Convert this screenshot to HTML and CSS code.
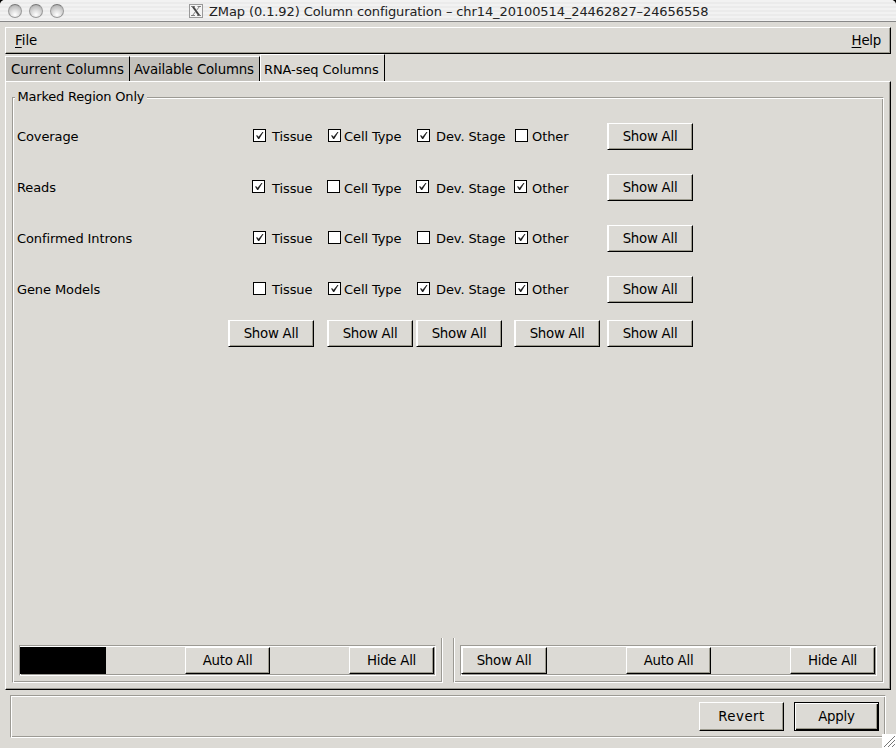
FILE: index.html
```html
<!DOCTYPE html>
<html lang="en">
<head>
<meta charset="utf-8">
<title>ZMap (0.1.92) Column configuration</title>
<link rel="stylesheet" href="styles.css">
</head>
<body>
<div class="window">
  <header class="titlebar">
    <div class="lights"><i class="light"></i><i class="light"></i><i class="light"></i></div>
    <svg class="xicon" width="14" height="14" viewBox="0 0 14 14"><rect x=".5" y=".5" width="13" height="13" fill="#f4f4f4" stroke="#999"/><path d="M3.8 2.5 10.2 11.5" stroke="#444" stroke-width="2"/><path d="M10.5 2.5 3.5 11.5M2 2.5h4M8.5 2.5H12M2 11.5h4M8 11.5h4" stroke="#666" stroke-width=".8"/></svg>
    <span class="title">ZMap (0.1.92) Column configuration – chr14_20100514_24462827–24656558</span>
  </header>
  <nav class="menubar"><span class="file"><u>F</u>ile</span><span class="help"><u>H</u>elp</span></nav>
  <div class="tabs">
    <div class="tab t1"><span>Current Columns</span></div>
    <div class="tab t2"><span>Available Columns</span></div>
    <div class="tab active"><span>RNA-seq Columns</span></div>
  </div>
  <main class="page">
    <section class="region">
      <h2 class="legend">Marked Region Only</h2>
      <div class="grid">
        <div class="name">Coverage</div>
        <label class="cell c1"><i class="box on"></i><span>Tissue</span></label>
        <label class="cell c2"><i class="box on"></i><span>Cell Type</span></label>
        <label class="cell c3"><i class="box on"></i><span>Dev. Stage</span></label>
        <label class="cell c4"><i class="box"></i><span>Other</span></label>
        <button class="btn"><span>Show All</span></button>

        <div class="name">Reads</div>
        <label class="cell c1 shift"><i class="box on"></i><span>Tissue</span></label>
        <label class="cell c2 shift"><i class="box"></i><span>Cell Type</span></label>
        <label class="cell c3 shift"><i class="box on"></i><span>Dev. Stage</span></label>
        <label class="cell c4 shift"><i class="box on"></i><span>Other</span></label>
        <button class="btn"><span>Show All</span></button>

        <div class="name">Confirmed Introns</div>
        <label class="cell c1"><i class="box on"></i><span>Tissue</span></label>
        <label class="cell c2"><i class="box"></i><span>Cell Type</span></label>
        <label class="cell c3"><i class="box"></i><span>Dev. Stage</span></label>
        <label class="cell c4"><i class="box on"></i><span>Other</span></label>
        <button class="btn"><span>Show All</span></button>

        <div class="name">Gene Models</div>
        <label class="cell c1"><i class="box"></i><span>Tissue</span></label>
        <label class="cell c2"><i class="box on"></i><span>Cell Type</span></label>
        <label class="cell c3"><i class="box on"></i><span>Dev. Stage</span></label>
        <label class="cell c4"><i class="box on"></i><span>Other</span></label>
        <button class="btn"><span>Show All</span></button>

        <div></div>
        <button class="btn"><span>Show All</span></button>
        <button class="btn"><span>Show All</span></button>
        <button class="btn"><span>Show All</span></button>
        <button class="btn"><span>Show All</span></button>
        <button class="btn"><span>Show All</span></button>
      </div>
    </section>
    <div class="groups">
      <div class="group left">
        <div class="etched strip">
          <div class="blank"></div>
          <button class="btn"><span>Auto All</span></button>
          <button class="btn"><span>Hide All</span></button>
        </div>
      </div>
      <div class="group right">
        <div class="etched strip">
          <button class="btn first"><span>Show All</span></button>
          <button class="btn"><span>Auto All</span></button>
          <button class="btn"><span>Hide All</span></button>
        </div>
      </div>
    </div>
  </main>
  <footer class="etched actions">
    <button class="btn revert"><span>Revert</span></button>
    <button class="btn apply"><span>Apply</span></button>
  </footer>
  <svg class="grip" width="14" height="14" viewBox="0 0 14 14"><rect width="14" height="14" fill="#fff"/><path d="M2 13 13 2M6 13l7-7M10 13l3-3" stroke="#777" stroke-width="1"/></svg>
</div>
</body>
</html>
```
FILE: styles.css
```css
* { box-sizing: border-box; }
body { margin: 0; background: #000; overflow: hidden; }
.window {
  position: relative;
  width: 896px;
  height: 748px;
  overflow: hidden;
  border-radius: 5px 5px 0 0;
  background: #dcdad5;
  color: #000;
  font: 13px/16px "DejaVu Sans", sans-serif;
  white-space: nowrap;
}
.titlebar {
  display: flex;
  height: 22px;
  padding-left: 8px;
  border-bottom: 1px solid #888;
  background: repeating-linear-gradient(#f2f2f2 0 2px, #ebebeb 2px 4px);
}
.lights { display: flex; gap: 7px; width: 181px; padding-top: 4px; }
.light {
  width: 14px;
  height: 14px;
  border: 1px solid #999;
  border-top-color: #777;
  border-radius: 50%;
  background: radial-gradient(circle at 50% 80%, #fff 0, #ddd 40%, #b8b8b8 80%);
}
.xicon { margin-top: 4px; }
.title {
  margin-left: 6px;
  font: 13px/23px "DejaVu Sans", sans-serif;
  letter-spacing: -0.1px;
  color: #222;
}

.menubar {
  display: flex;
  justify-content: space-between;
  width: 886px;
  height: 27px;
  margin: 5px 0 0 5px;
  padding: 4px 9px 0 9px;
  border: 1px solid;
  border-color: #fff #000 #000 #fff;
  box-shadow: inset -1px -1px #a19f94;
  font-size: 13.33px;
  line-height: 18px;
}
.help { letter-spacing: -0.25px; }
u { text-underline-offset: 2px; }

.tabs { display: flex; align-items: flex-end; height: 27px; padding-left: 5px; }
.tab {
  height: 25px;
  padding: 4px 0 0 5px;
  border: solid #fff;
  border-width: 1px 0 0 1px;
  border-right: 1px solid #000;
  background: #c4c2bd;
  font-size: 13.33px;
  line-height: 18px;
}
.t1 { width: 125px; letter-spacing: 0.05px; }
.t2 { width: 130px; padding-left: 4px; border-left: 0; letter-spacing: -0.16px; }
.tab.active {
  width: 125px;
  height: 27px;
  padding: 6px 0 0 3px;
  background: #dcdad5;
  font-size: 13px;
  letter-spacing: -0.08px;
}

.page {
  display: flex;
  flex-direction: column;
  width: 886px;
  height: 609px;
  margin-left: 5px;
  padding: 15px 6px 6px;
  border: 1px solid;
  border-color: #fff #000 #000 #fff;
  box-shadow: inset -1px -1px #9c9a94;
}
.region {
  width: 872px;
  height: 541px;
  border: 1px solid #9c9a94;
  border-width: 1px 1px 0;
  border-right: 1px solid #fff;
  box-shadow: inset 1px 1px #fff, inset -1px 0 #9c9a94;
}
.legend {
  width: 132px;
  height: 16px;
  margin: -9px 0 0 2px;
  padding-left: 2.5px;
  background: #dcdad5;
  font: 13px/16px "DejaVu Sans", sans-serif;
  letter-spacing: -0.2px;
}
.grid {
  display: grid;
  grid-template-columns: 211px 99px 89px 98px 93px 86px;
  grid-template-rows: 51px 51px 51px 44px 27px;
  padding: 18px 0 0 4px;
  letter-spacing: -0.1px;
}
.name { line-height: 27px; }
.cell { display: flex; height: 27px; padding: 6px 0 0 1px; }
.cell span { line-height: 16px; }
.box {
  display: block;
  position: relative;
  flex: none;
  width: 13px;
  height: 13px;
  border: 1px solid #000;
  background: #fff;
}
.box.on::after {
  content: "";
  position: absolute;
  left: 2px;
  top: 2px;
  width: 8px;
  height: 8px;
  background: #222;
  clip-path: polygon(0 3.6px, 1.2px 3.2px, 2.6px 4.8px, 6.4px 0, 7.5px 0, 3.2px 7px, 2.2px 7px);
}
.c1 { padding-left: 25px; }
.c1 span { margin-left: 6px; }
.c2 span { margin-left: 3px; }
.c3 span { margin-left: 6px; }
.c4 span { margin-left: 4px; }
.shift .box { margin: 0 1px 0 -1px; }
.shift span { margin-top: 1px; }

.btn {
  width: 86px;
  height: 27px;
  padding: 0;
  border: 1px solid;
  border-color: #fff #000 #000 #fff;
  border-radius: 0;
  background: #dcdad5;
  box-shadow: inset -1px -1px #9c9a8e;
  color: #000;
  font: 13.33px/25px "DejaVu Sans", sans-serif;
  letter-spacing: -0.25px;
}
.btn span { display: block; height: 25px; line-height: 26px; }
.grid .btn, .first { box-shadow: inset 1px 0 #fff, inset -1px -1px #9c9a8e; }

.groups { display: flex; justify-content: space-between; width: 872px; height: 45px; }
.group {
  width: 431px;
  height: 45px;
  padding: 7px 7px 0 6px;
  border: 1px solid;
  border-width: 0 1px 1px;
  border-color: #fff #fff #fff #9c9a94;
  box-shadow: inset 1px 0 #fff, inset -1px -1px #9c9a94;
}
.etched {
  border: 1px solid;
  border-color: #9c9a94 #fff #fff #9c9a94;
  box-shadow: inset 1px 1px #fff, inset -1px -1px #9c9a94;
}
.strip { display: flex; justify-content: space-between; width: 417px; height: 31px; padding: 1px 1px 0 0; }
.strip .btn { width: 85px; }
.strip .first { width: 86px; }
.blank { width: 86px; height: 27px; background: #000; }

.actions {
  display: flex;
  justify-content: flex-end;
  gap: 10px;
  width: 876px;
  height: 43px;
  margin: 5px 0 0 10px;
  padding: 6px 6px 0 0;
}
.actions .btn { width: 85px; height: 29px; letter-spacing: -0.2px; }
.actions .btn span { height: 27px; line-height: 28px; }
.actions .revert { letter-spacing: 0.5px; }
.actions .apply {
  border-color: #000;
  box-shadow: inset 1px 1px #fff, inset -1px -1px #000, inset -2px -2px #9c9a8e;
}
.grip { position: absolute; right: 0; bottom: 0; }
```
